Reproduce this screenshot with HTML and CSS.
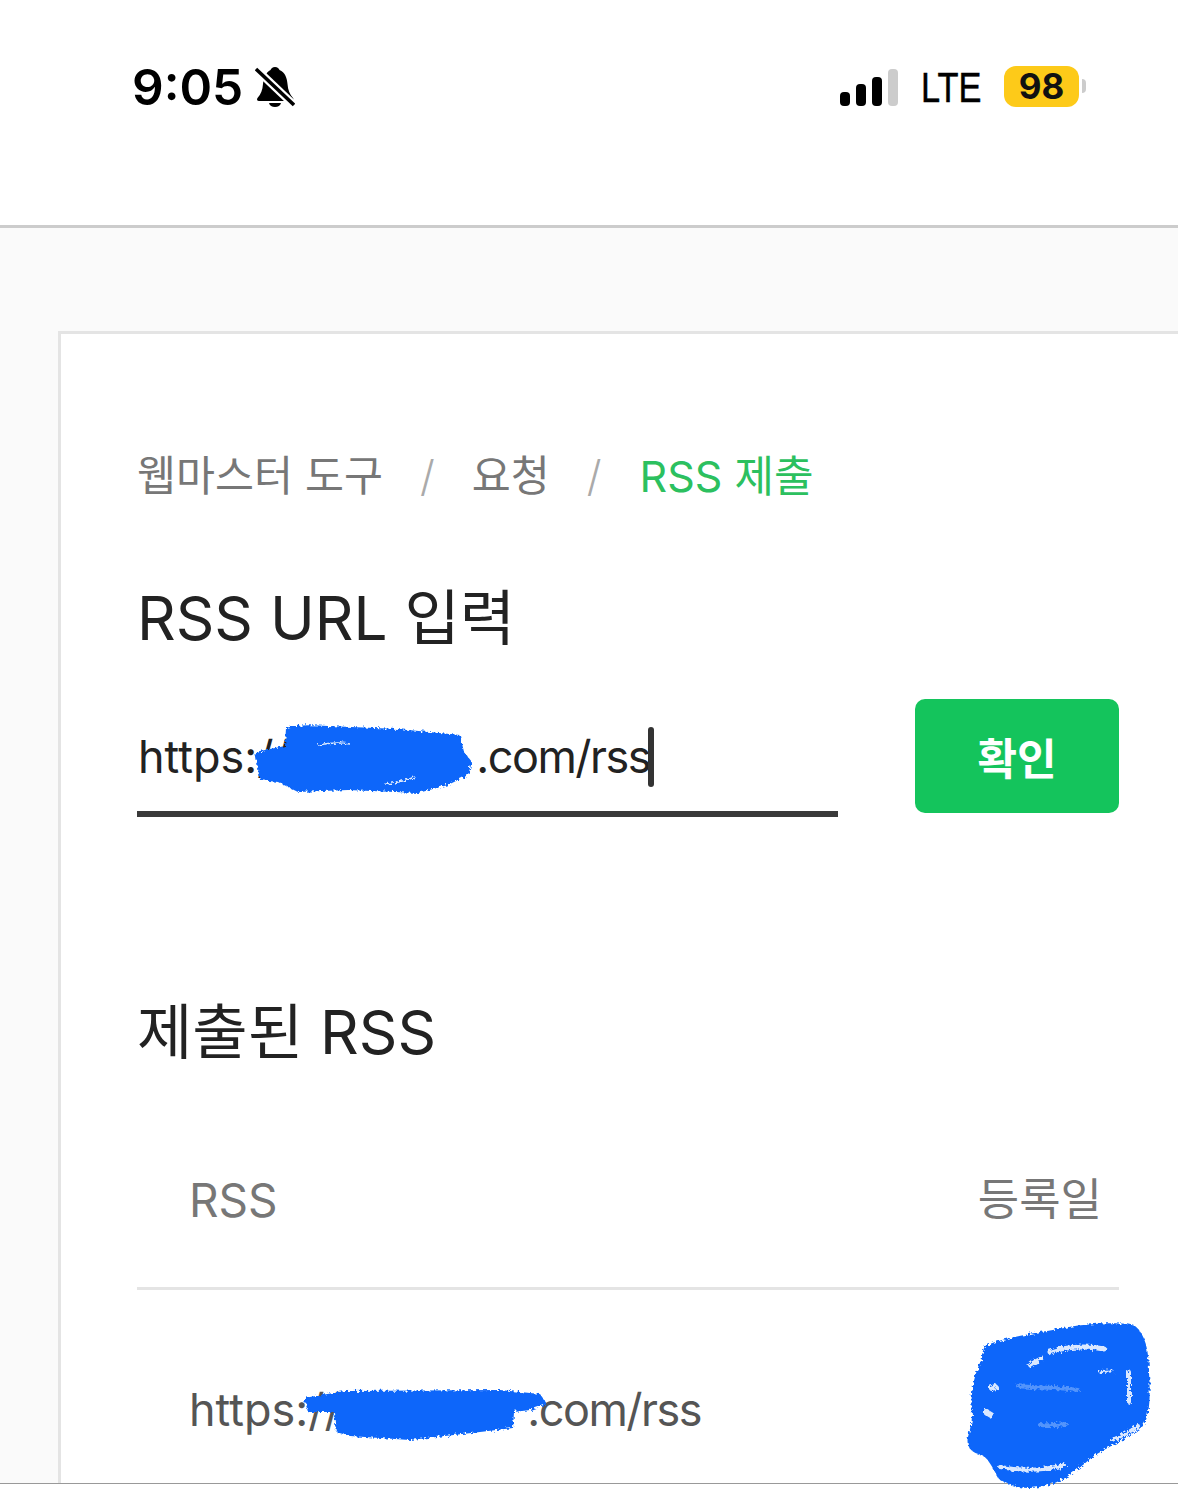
FILE: index.html
```html
<!DOCTYPE html>
<html lang="ko">

<head>
    <meta charset="UTF-8">
    <meta name="viewport" content="width=device-width, initial-scale=1.0">
    <title>RSS 제출</title>
    <link rel="stylesheet" href="styles.css">
</head>

<body>
    <!-- 상태 표시줄 -->
    <header class="status-bar">
        <div class="status-left">
            <span class="clock">9:05</span>
            <svg class="bell" width="40" height="42" viewBox="0 0 40 42">
                <path d="M20 1c2.500 0 4 1.500 4.500 3C30 6 32 12 32.500 18c.5 6 2 10 5.500 14 1 1.500.5 3-1.500 3H4c-2 0-2.500-1.500-1.500-3C6 28 7.500 24 8 18 8.500 12 11 6 15.500 4 16 2.500 17.500 1 20 1z"></path>
                <path d="M14 37h12c-.5 2.500-3 4-6 4s-5.500-1.500-6-4z"></path>
                <path class="bell-cut" d="M1 3l38 36"></path>
                <path class="bell-slash" d="M1 3l38 36"></path>
            </svg>
        </div>
        <div class="status-right">
            <div class="signal">
                <i class="bar bar-1"></i>
                <i class="bar bar-2"></i>
                <i class="bar bar-3"></i>
                <i class="bar bar-4"></i>
            </div>
            <span class="network">LTE</span>
            <div class="battery">
                <span class="battery-level">98</span>
                <i class="battery-cap"></i>
            </div>
        </div>
    </header>

    <main class="page">
        <section class="card">
            <nav class="crumbs">
                <span>웹마스터 도구</span>
                <span class="crumb-sep">/</span>
                <span>요청</span>
                <span class="crumb-sep">/</span>
                <span class="crumb-now">RSS 제출</span>
            </nav>

            <h2 class="title">RSS URL 입력</h2>
            <form class="rss-form">
                <div class="url-input">
                    <span>https://n</span><i class="host-gap"></i><span class="url-tail">.com/rss</span><i class="caret"></i>
                </div>
                <button class="ok-btn" type="button">확인</button>
            </form>

            <h2 class="title title-list">제출된 RSS</h2>
            <div class="table-head">
                <span>RSS</span>
                <span class="head-date">등록일</span>
            </div>
            <div class="table-row">
                <span>https://n</span><i class="host-gap"></i><span class="url-tail">.com/rss</span>
            </div>
        </section>
    </main>

    <!-- 파란 낙서 -->
    <svg class="scribbles" width="1178" height="1492" viewBox="0 0 1178 1492">
        <defs>
            <filter id="rough" x="-5%" y="-5%" width="110%" height="110%">
                <feTurbulence type="fractalNoise" baseFrequency="0.35" numOctaves="2" seed="4"></feTurbulence>
                <feDisplacementMap in="SourceGraphic" scale="6"></feDisplacementMap>
            </filter>
        </defs>
        <g class="rough">
            <path class="scrib-fill" d="M255 752L285 746 286 728Q298 724 328 726L398 729 460 735 464 752 472 762 468 775 448 785 418 793 348 790 298 792 278 782 260 780z"></path>
            <path class="scrib-gap" stroke-width="1.500" d="M318 745c10-2 20-3 32-1M385 784c10-1 20-3 30-7"></path>
            <path class="scrib-fill" d="M304 1398L345 1391 500 1390 540 1394 547 1404 530 1410 514 1412 513 1428 480 1432 410 1440 350 1436 336 1432 334 1412 308 1412z"></path>
            <path class="scrib-fill" d="M985 1346c22-10 60-14 84-19 18-3 52-6 66-1 10 8 14 24 14 46 1 20 2 42-6 54-18 14-38 22-52 32-16 14-30 26-52 29-18 3-30-2-40-8-6-10-10-20-17-24-12-2-16-10-14-18 2-8 4-14 4-22-2-20 2-42 10-56 0-7 2-11 3-13z"></path>
            <path class="scrib-gap" stroke-width="5" d="M1050 1352c18-6 40-6 54-3"></path>
            <path class="scrib-gap" stroke-width="4" d="M1030 1365c4-3 8-5 12-7"></path>
            <path class="scrib-gap" stroke-width="4" d="M1000 1467c20 4 42 4 64-2"></path>
            <path class="scrib-gap" stroke-width="4" d="M1129 1372v30"></path>
            <path class="scrib-gap" stroke-width="6" d="M992 1388l3-1M986 1412l5 3"></path>
            <path class="scrib-gap" stroke-width="4" d="M1112 1440c10-4 18-8 26-14"></path>
            <path class="scrib-gap" stroke-width="3" d="M1100 1372c4-1 8-1 12-1"></path>
            <path class="scrib-haze" stroke-width="4" d="M1018 1386c16 2 40 1 60 4M1040 1425c10 1 18 0 26-1"></path>
        </g>
    </svg>
</body>

</html>
```

FILE: styles.css
```css
html,
body {
    height: 100%;
}

body {
    margin: 0;
    background: #fff;
    font-family: Inter, "Noto Sans CJK KR", sans-serif;
    overflow: hidden;
    position: relative;
}

/* 상태 표시줄 */
.status-bar {
    height: 163px;
    border-bottom: 3px solid #ccc;
    display: flex;
    justify-content: space-between;
    align-items: flex-start;
    padding: 62px 92px 0 132px;
}

.status-left {
    display: flex;
    align-items: center;
    gap: 12px;
}

.clock {
    font-size: 49.500px;
    line-height: 50px;
    font-weight: 600;
    color: #000;
}

.bell {
    fill: #000;
    stroke: none;
}

.bell-cut {
    stroke: #fff;
    stroke-width: 8;
    fill: none;
}

.bell-slash {
    stroke: #000;
    stroke-width: 3.500;
    fill: none;
}

.status-right {
    display: flex;
    align-items: center;
    height: 50px;
}

.signal {
    display: flex;
    align-items: flex-end;
    gap: 6px;
    height: 37px;
    margin-top: 1px;
}

.bar {
    display: block;
    width: 10px;
    border-radius: 4px;
    background: #000;
}

.bar-1 {
    height: 14px;
}

.bar-2 {
    height: 22px;
}

.bar-3 {
    height: 29px;
}

.bar-4 {
    height: 37px;
    background: #ccc;
}

.network {
    font-family: "Liberation Sans", sans-serif;
    font-size: 43px;
    line-height: 50px;
    color: #000;
    margin-left: 23px;
    -webkit-text-stroke: .5px #000;
    transform: scaleX(.8);
    transform-origin: left center;
    width: 62px;
    margin-top: -1px;
}

.battery {
    display: flex;
    align-items: center;
    margin: -2px 0 0 21px;
}

.battery-level {
    width: 75px;
    height: 41px;
    border-radius: 12px;
    background: #fdca19;
    color: #111;
    font-size: 35px;
    font-weight: 700;
    line-height: 41px;
    text-align: center;
}

.battery-cap {
    display: block;
    width: 4px;
    height: 14px;
    margin-left: 3px;
    background: #ccc;
    border-radius: 0 7px 7px 0;
}

/* 본문 */
.page {
    height: 1256px;
    box-sizing: border-box;
    border-bottom: 1px solid #999;
    background: #fafafa;
    padding: 103px 0 0 58px;
    overflow: hidden;
}

.card {
    height: 1200px;
    box-sizing: border-box;
    background: #fff;
    border: 3px solid #e4e4e4;
    border-right: 0;
    padding: 112px 59px 0 76px;
}

.crumbs {
    display: flex;
    align-items: center;
    gap: 37px;
    font-size: 42.400px;
    line-height: 60px;
    color: #777;
}

.crumb-sep {
    color: #aaa;
    font-weight: 300;
}

.crumb-now {
    color: #2cc05f;
    font-size: 43px;
    margin-left: 1px;
}

.title {
    margin: 73px 0 0 0;
    font-size: 60.200px;
    line-height: 80px;
    font-weight: 400;
    color: #222;
}

.title-list {
    margin-top: 176px;
}

.rss-form {
    display: flex;
    justify-content: space-between;
    align-items: flex-start;
    margin-top: 40px;
}

.url-input {
    width: 701px;
    height: 118px;
    box-sizing: border-box;
    border-bottom: 6px solid #3a3a3a;
    display: flex;
    align-items: center;
    font-size: 45px;
    color: #222;
    padding: 3px 0 0 1px;
}

/* 가려진 도메인 자리 */
.host-gap {
    display: inline-block;
    width: 160px;
}

.url-tail {
    letter-spacing: -1.500px;
}

.caret {
    display: block;
    width: 6px;
    height: 60px;
    background: #333;
    border-radius: 3px;
    margin-left: -2px;
}

.ok-btn {
    width: 204px;
    height: 114px;
    border: 0;
    border-radius: 10px;
    background: #14c45c;
    color: #fff;
    font-family: inherit;
    font-size: 43px;
    font-weight: 700;
}

.table-head {
    display: flex;
    justify-content: space-between;
    margin-top: 77px;
    padding: 0 17px 0 52px;
    height: 137px;
    border-bottom: 3px solid #e4e4e4;
    font-size: 46px;
    line-height: 100px;
    color: #777;
}

.head-date {
    font-size: 45px;
}

.table-row {
    display: flex;
    padding: 85px 52px 0;
    font-size: 45px;
    line-height: 70px;
    color: #555;
}

/* 낙서는 화면 위에 겹침 */
.scribbles {
    position: absolute;
    left: 0;
    top: 0;
    pointer-events: none;
}

.rough {
    filter: url(#rough);
}

.scrib-fill {
    fill: #0a66fa;
}

.scrib-gap {
    fill: none;
    stroke: #fff;
    stroke-linecap: round;
    opacity: .85;
}

.scrib-haze {
    fill: none;
    stroke: #fff;
    stroke-linecap: round;
    opacity: .3;
}
```
